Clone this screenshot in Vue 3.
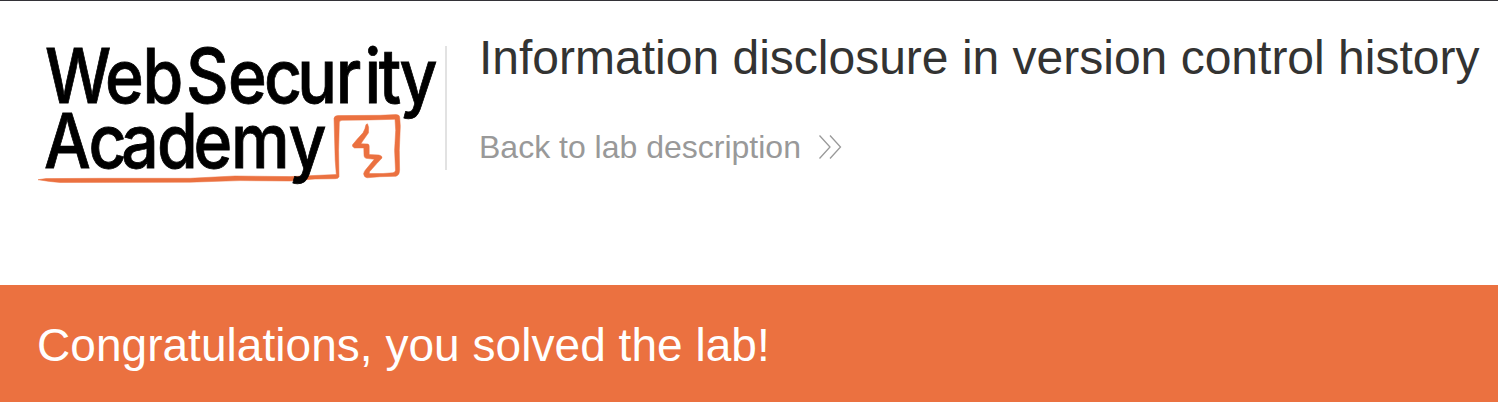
<script setup>
const title = 'Information disclosure in version control history'
const backLabel = 'Back to lab description'
const message = 'Congratulations, you solved the lab!'

// Letters are condensed horizontally, with hand-set origins for each glyph.
const condense = 0.88
const words = [
  { text: 'Web', y: 103.5, starts: [45, 105, 142.6] },
  { text: 'Security', y: 103.5, starts: [186, 228, 264, 297.3, 335.8, 364.5, 378.8, 399.4] },
  { text: 'Academy', y: 168.5, starts: [43.9, 88.5, 121.2, 157, 193.6, 231, 288.6] },
].map((w) => ({ ...w, xs: w.starts.map((x) => (x / condense).toFixed(2)).join(' ') }))
</script>

<template>
  <div class="page">
    <header class="header">
      <svg class="logo" viewBox="38 38 407 150" width="407" height="150" role="img" aria-label="Web Security Academy">
        <g class="mark">
          <path d="M38 179.400 L46 178.300 L100 178 L190 178 L215 176.700 L235 175.700 L290 176.300 L336.300 174.200 L335.200 160 L334 118 Q334.500 115.300 338 115.300 L380 115 L396 114.300 Q399.500 114.300 399.700 117 L400.300 126 L399.300 150 L399.600 170 Q399.500 175 396 176 L380 176.400 L367 177.500 Q364 177 363.600 173.500 Q364 171 366 169 L374.300 159 L366 158 Q364 157.500 364 155 L363.800 147.600 L354.500 147.700 Q351.800 146.500 352.500 144.500 L357.500 138.500 L363 132.500 Q365.300 128.500 366 124.300 L367.500 123.500 L368.600 127 L368.500 132.500 L362.500 141 L361 143.500 L368 143.700 Q369.200 144 369.200 146 L369.200 154.300 L379 154.700 Q382.500 155.500 382 157.700 L377 163 L369.500 171.500 L369.300 173.300 L383 173.200 L393 172.500 Q395.300 172 395.500 170 L394.600 150 L395.700 130 L395 119 L370 119.600 L342 120 Q339.300 120 339.300 122.500 L338.600 150 L339 176.500 Q338.500 178.500 335 178.400 L315 178.700 L290 180.700 L240 180.300 L190 181.900 L60 182.200 Q50 181.500 38 179.400 Z" />
        </g>
        <g class="word" :transform="`scale(${condense} 1)`">
          <text v-for="w in words" :key="w.text" :x="w.xs" :y="w.y">{{ w.text }}</text>
        </g>
      </svg>
      <div class="divider"></div>
      <div class="heading">
        <h2 class="title">{{ title }}</h2>
        <a class="back">
          <span>{{ backLabel }}</span>
          <svg class="chevrons" width="24" height="26" viewBox="0 0 24 26"><path d="M1.500 1.500 12 13 1.500 24.500M12 1.500 22.500 13 12 24.500" /></svg>
        </a>
      </div>
    </header>
    <section class="banner"><p>{{ message }}</p></section>
  </div>
</template>

<style>
body { margin: 0; background: #fff; }
</style>

<style scoped>
.page { box-sizing: border-box; height: 402px; border-top: 1px solid #333237; display: flex; flex-direction: column; overflow: hidden; font-family: "Liberation Sans", Arial, sans-serif; }
.header { height: 284px; flex: none; display: flex; align-items: flex-start; box-sizing: border-box; padding-left: 38px; }
.logo { flex: none; margin-top: 37px; overflow: visible; }
.mark path { fill: #eb7140; stroke: #eb7140; stroke-width: .5; }
.mark { transform: translateY(.3px); }
.word text { font-family: Inter, sans-serif; font-size: 75px; font-weight: 500; fill: #000; stroke: #000; stroke-width: .8; }
.divider { flex: none; width: 2px; height: 124px; margin-top: 45px; background: #e2e2e2; }
.heading { padding: 29px 0 0 32px; white-space: nowrap; }
.title { margin: 0; font-size: 48px; line-height: 56px; font-weight: 400; color: #333332; }
.back { display: flex; align-items: center; margin-top: 43px; font-size: 32px; line-height: 36px; color: #999; }
.chevrons { margin-left: 17px; fill: none; stroke: #999; stroke-width: 1.3; }
.banner { flex: 1; background: #eb7140; color: #fff; padding: 34px 37px 0; }
.banner p { margin: 0; font-size: 46px; line-height: 52px; letter-spacing: .04px; }
</style>
